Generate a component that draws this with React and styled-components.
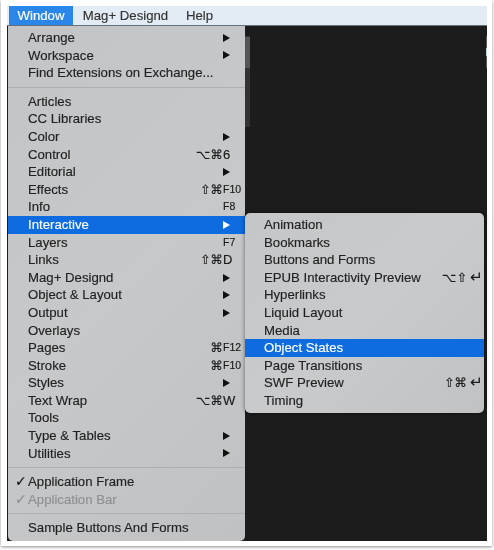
import React from 'react';
import styled, { createGlobalStyle } from 'styled-components';

const Global = createGlobalStyle`
  html, body { margin: 0; padding: 0; background: #fff; }
  #root { width: 494px; height: 550px; overflow: hidden; }
`;
const Page = styled.div`
  width: 494px; height: 550px; box-sizing: border-box; padding: 0 2px 4px 1px;
  background: #fff; font-family: "Liberation Sans", Arial, sans-serif; font-size: 13.2px;
  color: #222; -webkit-text-stroke: 0.15px currentColor;
`;
const Card = styled.div`
  height: 100%; box-sizing: border-box; padding: 6px 5px 5px 6px; background: #fff;
  box-shadow: 0 1px 3px rgba(0,0,0,.45);
`;
const Frame = styled.div`
  position: relative; height: 100%; display: flex; flex-direction: column;
  filter: blur(0.5px);
`;
const MenuBar = styled.div`
  height: 20px; flex: none; box-sizing: border-box; display: flex; background: #e3ebf4; padding-left: 2px;
  border-bottom: 1px solid #66707c;
`;
const BarItem = styled.div`
  height: 19px; line-height: 19px;
  background: ${p => (p.$active ? '#2b86ea' : 'transparent')};
  color: ${p => (p.$active ? '#fff' : '#333')};
  width: ${p => p.$w}px; text-align: center;
`;
const Body = styled.div`flex: 1; min-height: 0; display: flex; background: #1c1c1c; padding-left: 1px;`;
const Menu = styled.div`
  width: 237px; flex: none; box-sizing: border-box; padding: 3px 0 4px;
  background: linear-gradient(135deg, #c2c4c6, #c6c8ca 50%, #bfc1c3);
  border-radius: 0 0 5px 5px;
`;
const Row = styled.div`
  height: 17.6px; line-height: 17.6px; display: flex; align-items: center; justify-content: space-between;
  padding-left: ${p => p.$left || 20}px; position: relative; white-space: nowrap;
  background: ${p => (p.$active ? '#0e6be0' : 'transparent')};
  color: ${p => (p.$active ? '#fff' : p.$off ? '#8e9092' : '#222')};
`;
const Sep = styled.div`height: 1px; background: #aeb0b2; margin: 5px 0 5px;`;
const Arrow = styled.span`
  width: 0; height: 0; margin-right: 15px; border-left: 7px solid ${p => (p.$active ? '#fff' : '#111')};
  border-top: 4px solid transparent; border-bottom: 4px solid transparent;
`;
const Shortcut = styled.span`display: flex; align-items: center; color: #1a1a1a;`;
const Mods = styled.span`
  font-family: "DejaVu Sans", sans-serif; font-size: 12.5px; margin-right: ${p => p.$gap}px;
`;
const Key = styled.span`
  width: ${p => p.$w}px; text-align: left; font-size: ${p => (p.$glyph ? 15 : p.$small ? 10.5 : 13)}px;
  font-family: ${p => (p.$glyph ? '"DejaVu Sans", sans-serif' : 'inherit')};
`;
const Check = styled.span`
  position: absolute; left: 7px; top: 0; font-family: "DejaVu Sans", sans-serif; font-size: 14px;
  color: ${p => (p.$off ? '#8e9092' : '#111')};
`;
const Scroll = styled.div`width: 5px; height: 91px; margin-top: 10px; background: #333;`;
const Thumb = styled.div`height: 31px; margin-top: 1px; background: #555;`;
const Edge = styled.div`
  width: 1px; height: 32px; margin: 10px 0 0 auto;
  background: linear-gradient(#555 0 38%, #b8d8d8 38% 62%, #555 62%);
`;
const Submenu = styled.div`
  position: absolute; left: 238px; top: 207px; width: 239px; height: 200px; box-sizing: border-box;
  padding: 3px 0; border-radius: 5px;
  background: linear-gradient(135deg, #c4c6c8, #c8cacc 50%, #c0c2c4);
  box-shadow: 0 0 4px rgba(0,0,0,.5);
`;

const main1 = [
  ['Arrange', 'a'], ['Workspace', 'a'], ['Find Extensions on Exchange...'],
];
const main2 = [
  ['Articles'], ['CC Libraries'], ['Color', 'a'], ['Control', '⌥⌘', '6'], ['Editorial', 'a'],
  ['Effects', '⇧⌘', 'F10'], ['Info', '', 'F8'], ['Interactive', 'a', null, true], ['Layers', '', 'F7'], ['Links', '⇧⌘', 'D'],
  ['Mag+ Designd', 'a'], ['Object & Layout', 'a'], ['Output', 'a'], ['Overlays'], ['Pages', '⌘', 'F12'],
  ['Stroke', '⌘', 'F10'], ['Styles', 'a'], ['Text Wrap', '⌥⌘', 'W'], ['Tools'], ['Type & Tables', 'a'], ['Utilities', 'a'],
];
const sub = [
  ['Animation'], ['Bookmarks'], ['Buttons and Forms'], ['EPUB Interactivity Preview', '⌥⇧', '↵'], ['Hyperlinks'],
  ['Liquid Layout'], ['Media'], ['Object States', null, null, true], ['Page Transitions'], ['SWF Preview', '⇧⌘', '↵'], ['Timing'],
];
const Item = ({ label, right, k, active, left, keyW = 22, gap = 0 }) => (
  <Row $active={active} $left={left}>
    <span>{label}</span>
    {right === 'a' ? <Arrow $active={active} /> : k ? (
      <Shortcut>
        <Mods $gap={gap}>{right}</Mods>
        <Key $w={keyW} $small={k.length > 1 && k[0] === 'F'} $glyph={k === '↵'}>{k}</Key>
      </Shortcut>
    ) : null}
  </Row>
);

export default function App() {
  return (
    <Page>
      <Global />
      <Card>
        <Frame>
          <MenuBar>
            <BarItem $active $w={64}>Window</BarItem>
            <BarItem $w={105}>Mag+ Designd</BarItem>
            <BarItem $w={43}>Help</BarItem>
          </MenuBar>
          <Body>
            <Menu>
              {main1.map(([l, r]) => <Item key={l} label={l} right={r} />)}
              <Sep />
              {main2.map(([l, r, k, a]) => <Item key={l} label={l} right={r} k={k} active={a} />)}
              <Sep />
              <Row><Check>✓</Check><span>Application Frame</span></Row>
              <Row $off><Check $off>✓</Check><span>Application Bar</span></Row>
              <Sep />
              <Row><span>Sample Buttons And Forms</span></Row>
            </Menu>
            <Scroll><Thumb /></Scroll>
            <Edge />
          </Body>
          <Submenu>
            {sub.map(([l, r, k, a]) => <Item key={l} label={l} right={r} k={k} active={a} left={19} keyW={14} gap={3} />)}
          </Submenu>
        </Frame>
      </Card>
    </Page>
  );
}
